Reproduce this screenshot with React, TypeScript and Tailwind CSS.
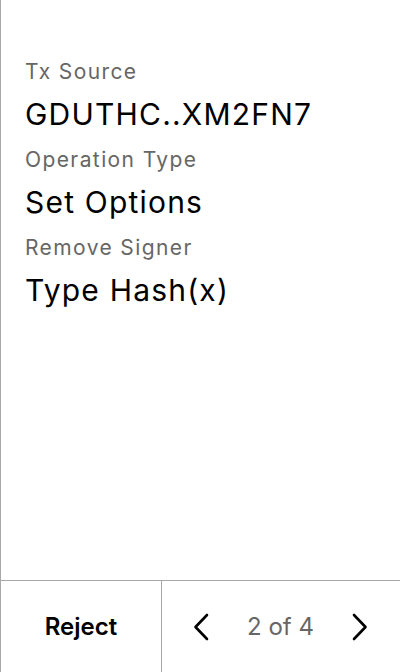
import React from 'react';

const rows = [
  { label: 'Tx Source', value: 'GDUTHC..XM2FN7' },
  { label: 'Operation Type', value: 'Set Options' },
  { label: 'Remove Signer', value: 'Type Hash(x)' },
];

const Chevron: React.FC<{ dir: 'left' | 'right' }> = ({ dir }) => (
  <svg width="16" height="28" viewBox="0 0 16 28" fill="none">
    <path
      d={dir === 'left' ? 'M14 2 L2.5 14 L14 26' : 'M2 2 L13.5 14 L2 26'}
      stroke="#000"
      strokeWidth="2.6"
      strokeLinecap="round"
      strokeLinejoin="round"
    />
  </svg>
);

export default function App() {
  return (
    <div
      className="w-[400px] h-[672px] flex flex-col bg-white border-l border-[#a8a8a8]"
      style={{ fontFamily: 'Inter, "Noto Sans", sans-serif' }}
    >
      {/* Details */}
      <div className="flex-1 pt-[52px] pl-6">
        {rows.map((r) => (
          <div key={r.label}>
            <div className="h-10 leading-10 text-[21px] tracking-[1.4px] text-[#666]">{r.label}</div>
            <div className="h-12 leading-[44px] text-[30px] tracking-[1.2px] text-black">{r.value}</div>
          </div>
        ))}
      </div>

      {/* Footer */}
      <div className="h-[92px] flex border-t border-[#a8a8a8]">
        <button className="w-[160px] flex items-center justify-center text-[24px] font-semibold text-black">
          Reject
        </button>
        <div className="flex-1 flex items-center justify-between pl-[31px] pr-[32px] border-l border-[#a8a8a8]">
          <Chevron dir="left" />
          <span className="text-[24px] text-[#666]">2 of 4</span>
          <Chevron dir="right" />
        </div>
      </div>
    </div>
  );
}
